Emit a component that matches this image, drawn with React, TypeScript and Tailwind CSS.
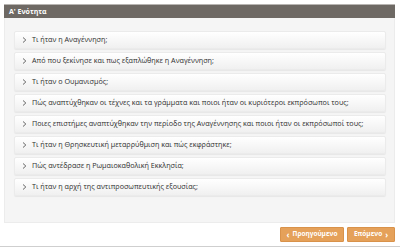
const questions = [
  "Τι ήταν η Αναγέννηση;",
  "Από που ξεκίνησε και πως εξαπλώθηκε η Αναγέννηση;",
  "Τι ήταν ο Ουμανισμός;",
  "Πώς αναπτύχθηκαν οι τέχνες και τα γράμματα και ποιοι ήταν οι κυριότεροι εκπρόσωποι τους;",
  "Ποιες επιστήμες αναπτύχθηκαν την περίοδο της Αναγέννησης και ποιοι ήταν οι εκπρόσωποί τους;",
  "Τι ήταν η Θρησκευτική μεταρρύθμιση και πώς εκφράστηκε;",
  "Πώς αντέδρασε η Ρωμαιοκαθολική Εκκλησία;",
  "Τι ήταν η αρχή της αντιπροσωπευτικής εξουσίας;",
];

export default function App() {
  return (
    <div className="w-[400px] h-[247px] bg-white font-['Open_Sans',sans-serif] pt-1 px-1 border-b border-[#cfcfcf] overflow-hidden">
      {/* Section header */}
      <div className="w-[391px] h-[14px] bg-[#6e6964] border-t border-[#b8b5b2] flex items-center pl-[5px]">
        <span className="text-white text-[7px] font-bold leading-none">Α' Ενότητα</span>
      </div>

      {/* Question list */}
      <div className="w-[391px] h-[205px] bg-[#f5f5f5] border border-t-0 border-[#ececec] pt-[13px] pl-[9px] pr-[8px] flex flex-col gap-[3px]">
        {questions.map((q) => (
          <div
            key={q}
            className="h-[18px] flex items-center gap-[5px] pl-[7px] rounded-[2px] border border-[#ebebeb] bg-gradient-to-b from-white to-[#f0f0f0] shadow-[0_1px_1px_rgba(0,0,0,0.06)]"
          >
            <svg width="5" height="6" viewBox="0 0 5 6" className="shrink-0">
              <path d="M1 0.5 L3.8 3 L1 5.5" fill="none" stroke="#555" strokeWidth="0.9" />
            </svg>
            <span className="text-[7.2px] text-[#2e2e2e] leading-none whitespace-nowrap">{q}</span>
          </div>
        ))}
      </div>

      {/* Navigation */}
      <div className="w-[391px] flex justify-end gap-[3px] mt-1">
        <button className="h-[15px] w-[64px] bg-[#e5a15a] border border-[#d9924a] rounded-[1px] flex items-center justify-center gap-[3px] text-white text-[6.5px] font-bold leading-none">
          <span className="text-[8px]">‹</span>
          <span>Προηγούμενο</span>
        </button>
        <button className="h-[15px] w-[48px] bg-[#e5a15a] border border-[#d9924a] rounded-[1px] flex items-center justify-center gap-[3px] text-white text-[6.5px] font-bold leading-none">
          <span>Επόμενο</span>
          <span className="text-[8px]">›</span>
        </button>
      </div>
    </div>
  );
}
